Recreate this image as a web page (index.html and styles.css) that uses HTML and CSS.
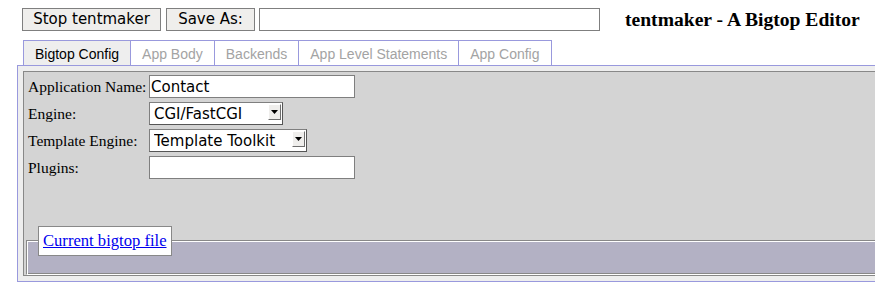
FILE: index.html
```html
<!DOCTYPE html>
<html>
<head>
<meta charset="utf-8">
<title>tentmaker - A Bigtop Editor</title>
<link rel="stylesheet" href="styles.css">
</head>
<body>
<div class="topbar">
  <button class="btn btn-stop">Stop tentmaker</button>
  <button class="btn btn-save">Save As:</button>
  <input class="save-name" type="text" value="">
  <h1 class="title">tentmaker - A Bigtop Editor</h1>
</div>
<ul class="tabs">
  <li class="tab active">Bigtop Config</li>
  <li class="tab">App Body</li>
  <li class="tab">Backends</li>
  <li class="tab">App Level Statements</li>
  <li class="tab">App Config</li>
</ul>
<div class="frame">
  <div class="panel">
    <div class="form">
      <label class="label">Application Name:</label>
      <input class="field" type="text" value="Contact">
      <label class="label">Engine:</label>
      <div class="select select-engine">
        <select><option>CGI/FastCGI</option><option>mod_perl 1.3</option></select>
        <span class="arrow"><svg width="7" height="4" viewBox="0 0 7 4"><polygon points="0,0 7,0 3.5,4" fill="#000"/></svg></span>
      </div>
      <label class="label">Template Engine:</label>
      <div class="select select-template">
        <select><option>Template Toolkit</option></select>
        <span class="arrow"><svg width="7" height="4" viewBox="0 0 7 4"><polygon points="0,0 7,0 3.5,4" fill="#000"/></svg></span>
      </div>
      <label class="label">Plugins:</label>
      <input class="field" type="text" value="">
    </div>
    <div class="bigtop">
      <div class="legend"><a href="#">Current bigtop file</a></div>
    </div>
  </div>
</div>
</body>
</html>
```
FILE: styles.css
```css
html {
  overflow: hidden;
}
body {
  margin: 0;
  padding: 8px 0 0 22px;
  background: #fff;
  font-family: "Liberation Serif", "Times New Roman", serif;
  color: #000;
}
.topbar {
  display: flex;
  align-items: flex-start;
  height: 23px;
}
.btn {
  box-sizing: border-box;
  height: 23px;
  margin: 0 5px 0 0;
  padding: 0;
  border: 1px solid #7f7f7f;
  border-radius: 0;
  background: #efeeec;
  font: 15px/21px "DejaVu Sans", sans-serif;
  color: #000;
  text-align: center;
}
.btn-stop {
  width: 139px;
}
.btn-save {
  width: 89px;
  margin-right: 4px;
}
.save-name {
  box-sizing: border-box;
  width: 341px;
  height: 23px;
  margin: 0;
  padding: 0 2px;
  border: 1px solid #7f7f7f;
  background: #fff;
  font: 15px "DejaVu Sans", sans-serif;
}
.title {
  margin: 0 0 0 25px;
  font: bold 19.6px/23px "Liberation Serif", "Times New Roman", serif;
  white-space: nowrap;
}
.tabs {
  display: flex;
  list-style: none;
  margin: 9px 0 0 1px;
  padding: 0;
}
.tab {
  margin-right: -1px;
  padding: 5px 11px 3px;
  border: 1px solid #9999dd;
  border-bottom: none;
  background: #fff;
  color: #a3a3a3;
  font: 14px/16px "Liberation Sans", Arial, sans-serif;
  white-space: nowrap;
}
.tab.active {
  background: #eeeeee;
  color: #000;
}
.frame {
  margin: 0 -40px 0 -5px;
  padding: 5px;
  border: 1px solid #9999dd;
  background: #eeeeee;
}
.panel {
  padding: 0 0 0 2px;
  border: 1px solid #888;
  background: #d4d4d4;
}
.form {
  display: grid;
  grid-template-columns: 121px auto;
  grid-auto-rows: 23px;
  row-gap: 4px;
  margin: 3px 0 0 2px;
  align-items: center;
  justify-items: start;
}
.label {
  font: 15.5px "Liberation Serif", "Times New Roman", serif;
  white-space: nowrap;
}
.field {
  box-sizing: border-box;
  width: 206px;
  height: 23px;
  margin: 0;
  padding: 0 1px;
  border: 1px solid #7f7f7f;
  background: #fff;
  font: 15px "DejaVu Sans", sans-serif;
  color: #000;
}
.select {
  box-sizing: border-box;
  display: flex;
  height: 23px;
  border: 1px solid #7f7f7f;
  border-right-color: #555;
  border-bottom-color: #555;
  background: #fff;
}
.select-engine {
  width: 134px;
}
.select-template {
  width: 158px;
}
.select select {
  appearance: none;
  -webkit-appearance: none;
  flex: 1;
  min-width: 0;
  height: 100%;
  margin: 0;
  padding: 0 0 0 4px;
  border: 0;
  outline: none;
  background: transparent;
  font: 15px "DejaVu Sans", sans-serif;
  color: #000;
}
.arrow {
  box-sizing: border-box;
  display: flex;
  align-items: center;
  justify-content: center;
  width: 13px;
  height: 16px;
  margin: 1px 1px 0 0;
  border: 1px solid #fff;
  border-right-color: #6e6e6e;
  border-bottom-color: #6e6e6e;
  background: #efeeec;
}
.bigtop {
  box-sizing: content-box;
  height: 33px;
  margin-top: 61px;
  padding-left: 11px;
  border-top: 1px solid #888;
  border-left: 1px solid #888;
  border-bottom: 1px solid #fff;
  box-shadow: inset 1px 1px 0 #fff, inset 0 -1px 0 #888;
  background: #b3b1c4;
}
.legend {
  display: inline-block;
  margin-top: -15px;
  padding: 5px 4px;
  border: 1px solid #888;
  background: #fff;
  font: 16.6px/18px "Liberation Serif", "Times New Roman", serif;
  vertical-align: top;
}
.legend a {
  color: #0000ee;
  text-decoration: underline;
}
```
